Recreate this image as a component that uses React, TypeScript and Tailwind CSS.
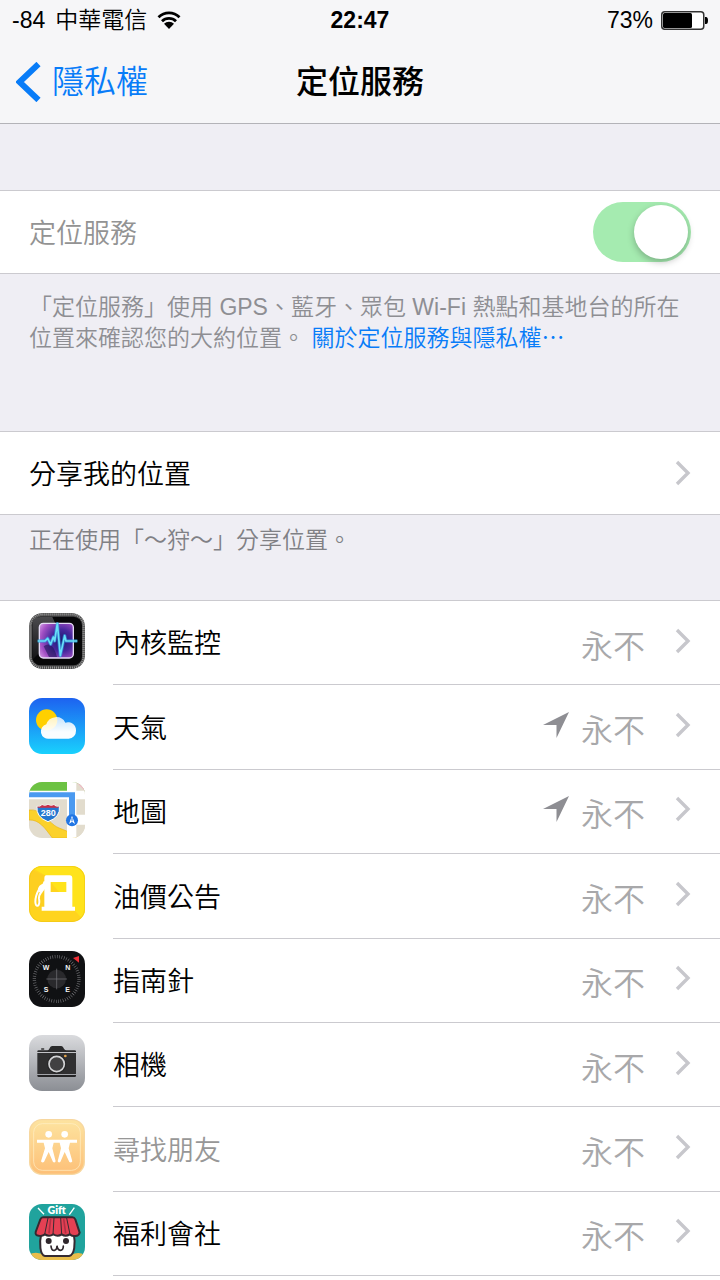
import type { ReactNode } from "react";

interface AppEntry {
  id: string;
  name: string;
  icon: ReactNode;
  recent?: boolean;
  disabled?: boolean;
}

function IconFrame({ children }: { children: ReactNode }) {
  return (
    <svg viewBox="0 0 168 168" className="mb-1 size-14 shrink-0 rounded-[13px]" aria-hidden="true">
      {children}
    </svg>
  );
}

function MonitorIcon() {
  return (
    <IconFrame>
      <defs>
        <radialGradient id="monitor-screen" cx="0.65" cy="0.5" r="0.8">
          <stop offset="0" stopColor="#181a70" />
          <stop offset="0.4" stopColor="#47289c" />
          <stop offset="0.75" stopColor="#a24fc4" />
          <stop offset="1" stopColor="#d49ae6" />
        </radialGradient>
        <linearGradient id="monitor-gloss" x1="0" y1="0" x2="0" y2="1">
          <stop offset="0" stopColor="#77777b" />
          <stop offset="1" stopColor="#1b1b1e" />
        </linearGradient>
      </defs>
      <rect width="168" height="168" rx="38" fill="#4b4b4b" />
      <rect x="4" y="4" width="160" height="160" rx="34" fill="none" stroke="#9b9b9b" strokeWidth="7" strokeDasharray="3 3" />
      <rect x="9" y="11" width="150" height="146" rx="26" fill="#070708" />
      <path d="M35 12H70L92 60L30 120L10 140V37Q10 12 35 12Z" fill="url(#monitor-gloss)" opacity="0.6" />
      <rect x="31" y="31" width="102" height="104" rx="12" fill="url(#monitor-screen)" stroke="#e5dcf5" strokeWidth="4" />
      <path d="M44 100Q70 80 84 132H60Z" fill="#1d1458" opacity="0.6" />
      <path d="M26 84H48L56 76L65 94L73 72L77 84L85 32L94 128L107 68L111 84H145" fill="none" stroke="#2e9eea" strokeWidth="10" strokeLinejoin="round" opacity="0.6" />
      <path d="M26 84H48L56 76L65 94L73 72L77 84L85 32L94 128L107 68L111 84H145" fill="none" stroke="#67e0f8" strokeWidth="5" strokeLinejoin="round" />
    </IconFrame>
  );
}

function WeatherIcon() {
  return (
    <IconFrame>
      <defs>
        <linearGradient id="weather-sky" x1="0" y1="0" x2="0" y2="1">
          <stop offset="0" stopColor="#1d62f0" />
          <stop offset="1" stopColor="#19d1fd" />
        </linearGradient>
        <linearGradient id="weather-cloud" x1="0" y1="0" x2="0" y2="1">
          <stop offset="0" stopColor="#fff" stopOpacity="0.75" />
          <stop offset="0.7" stopColor="#fff" stopOpacity="0.98" />
        </linearGradient>
      </defs>
      <rect width="168" height="168" fill="url(#weather-sky)" />
      <circle cx="53" cy="66" r="32" fill="#ffd000" />
      <path d="M61 122A22 22 0 0 1 52 79A31 31 0 0 1 109 74A24 24 0 0 1 141 98A23 23 0 0 1 119 122Z" fill="url(#weather-cloud)" />
    </IconFrame>
  );
}

function MapsIcon() {
  return (
    <IconFrame>
      <rect width="168" height="168" fill="#e2dccd" />
      <rect width="168" height="30" fill="#6cc243" />
      <path d="M0 84C36 80 50 110 76 130C94 143 108 140 150 168H70C48 138 30 112 0 114Z" fill="#fbd12b" stroke="#e9b51a" strokeWidth="2" />
      <path d="M136 0H168V168H136Z" fill="#e2dccd" />
      <path d="M142 0H168V28Z" fill="#f6b3cb" />
      <path d="M0 26H168V52H0ZM114 0H142V168H114ZM138 98H168V128H138Z" fill="#fff" />
      <path d="M0 31H138V112H120V46H0Z" fill="#4b9af0" />
      <path d="M24 73Q33 76 39 69Q48 74 57 68Q66 74 75 69Q81 76 91 73Q96 105 57 119Q20 105 24 73Z" fill="#2477cf" stroke="#fff" strokeWidth="3" />
      <path d="M26 73Q33 76 39 69Q48 74 57 68Q66 74 75 69Q81 76 89 73L88 77H26Z" fill="#c92f45" />
      <text x="58" y="101" textAnchor="middle" fontSize="27" fontWeight="700" fill="#fff" fontFamily="Liberation Sans, sans-serif">280</text>
      <circle cx="129" cy="115" r="18" fill="#2176e4" />
      <path d="M129 101L138 126L129 119L120 126Z" fill="#fff" />
      <path d="M129 108V118" stroke="#2176e4" strokeWidth="3" />
    </IconFrame>
  );
}

function FuelIcon() {
  return (
    <IconFrame>
      <rect width="168" height="168" fill="#ffd41e" />
      <path d="M48 28L0 0H168V168L136 132Z" fill="#ffe31b" />
      <path d="M0 8L48 30V132H0Z" fill="#fccb22" opacity="0.55" />
      <rect x="1" y="1" width="166" height="166" rx="38" fill="none" stroke="#edc414" strokeWidth="2" />
      <path d="M52 28H122Q130 28 130 38V122H138V134H38V122H46V38Q46 28 52 28ZM65 48V78H112V48Z" fill="#fff" fillRule="evenodd" />
      <path d="M31 68Q19 88 19 108Q20 122 27 119Q33 114 30 98Q29 88 38 76" fill="none" stroke="#fff" strokeWidth="6" strokeLinejoin="round" />
      <path d="M27 68Q29 58 41 53L44 46H50V66L38 82L30 78Z" fill="#fff" />
    </IconFrame>
  );
}

function CompassIcon() {
  return (
    <IconFrame>
      <rect width="168" height="168" fill="#101113" />
      <circle cx="83" cy="84" r="67" fill="none" stroke="#8c8c90" strokeWidth="10" strokeDasharray="1.5 5.5" />
      <circle cx="83" cy="84" r="28" fill="#29292c" />
      <path d="M52 84H114M83 53V115" stroke="#77777b" strokeWidth="2" />
      <path d="M150 15V35L132 21Z" fill="#f02e36" />
      <g fill="#f5f5f5" fontSize="21" fontWeight="700" textAnchor="middle" fontFamily="Liberation Sans, sans-serif">
        <text x="51" y="58">W</text>
        <text x="116" y="58">N</text>
        <text x="51" y="123">S</text>
        <text x="116" y="123">E</text>
      </g>
    </IconFrame>
  );
}

function CameraIcon() {
  return (
    <IconFrame>
      <defs>
        <linearGradient id="camera-back" x1="0" y1="0" x2="0" y2="1">
          <stop offset="0" stopColor="#dadbde" />
          <stop offset="1" stopColor="#8b8e94" />
        </linearGradient>
      </defs>
      <rect width="168" height="168" fill="url(#camera-back)" />
      <path d="M25 51V49Q25 46 29 46H55Q59 46 61 41Q64 33 69 33H97Q102 33 105 41Q108 46 112 46H137Q141 46 141 49V51Z" fill="#2b2b2c" />
      <rect x="36" y="40" width="10" height="4" rx="2" fill="#333" />
      <rect x="25" y="54" width="116" height="63" fill="#303031" />
      <path d="M25 120H141V122Q141 126 137 126H29Q25 126 25 122Z" fill="#242425" />
      <circle cx="83" cy="87" r="29" fill="#252526" />
      <circle cx="83" cy="87" r="23" fill="#414142" stroke="#d2d3d5" strokeWidth="5" />
      <circle cx="109" cy="63" r="4" fill="#e4a34a" />
    </IconFrame>
  );
}

function FriendsIcon() {
  return (
    <IconFrame>
      <defs>
        <linearGradient id="friends-back" x1="0" y1="0" x2="0" y2="1">
          <stop offset="0" stopColor="#fde39f" />
          <stop offset="1" stopColor="#fdc078" />
        </linearGradient>
      </defs>
      <rect width="168" height="168" fill="#f7d79f" />
      <rect x="4" y="4" width="160" height="160" rx="35" fill="url(#friends-back)" />
      <rect x="14" y="14" width="140" height="140" rx="26" fill="none" stroke="#fff0c8" strokeWidth="2" />
      <g fill="#fff">
        <circle cx="59" cy="46" r="10" />
        <circle cx="107" cy="46" r="10" />
        <path d="M24 62H144V71H123L119 88L130 127Q128 132 121 129L107 99L94 129Q88 132 86 127L96 88L92 71H74L70 88L80 127Q78 132 72 129L59 99L45 129Q38 132 36 127L48 88L44 71H24Z" />
      </g>
    </IconFrame>
  );
}

function GiftIcon() {
  return (
    <IconFrame>
      <rect width="168" height="168" fill="#20a39d" />
      <path d="M0 168V152Q20 140 50 154H126Q148 140 168 154V168Z" fill="#e8bd4b" />
      <path d="M27 12L45 31M136 11L121 32" stroke="#fff" strokeWidth="4" />
      <text x="83" y="30" textAnchor="middle" fontSize="32" fontWeight="800" fill="#fff" fontFamily="Lato, sans-serif">Gift</text>
      <path d="M37 88C30 118 33 153 48 156H120C137 153 140 118 134 88Z" fill="#fff" stroke="#352a31" strokeWidth="6" />
      <path d="M42 40H130Q136 40 139 46L152 86Q150 96 139 96Q130 97 122 91Q110 99 98 91Q86 99 73 91Q60 99 48 91Q38 98 29 95Q18 94 20 84L34 46Q37 40 42 40Z" fill="#e54053" stroke="#352a31" strokeWidth="6" />
      <path d="M57 42L47 91M75 42L72 91M95 42L98 91M113 42L123 91" stroke="#352a31" strokeWidth="3" />
      <path d="M65 44L60 88M104 44L110 88" stroke="#b32f45" strokeWidth="5" />
      <circle cx="59" cy="111" r="9" fill="#30272d" />
      <circle cx="111" cy="111" r="9" fill="#30272d" />
      <path d="M66 126Q67 140 76 139Q84 137 84 125Q85 138 94 139Q103 139 103 126" fill="none" stroke="#30272d" strokeWidth="5" strokeLinecap="round" />
    </IconFrame>
  );
}

function Chevron() {
  return (
    <svg viewBox="0 0 16 26" className="h-[26px] w-4 shrink-0" aria-hidden="true">
      <path d="M2 2L13 13L2 24" fill="none" stroke="#c7c7cc" strokeWidth="3.4" />
    </svg>
  );
}

function LocationArrow() {
  return (
    <svg viewBox="0 0 26 26" className="size-[26px]" role="img" aria-label="最近使用">
      <path d="M26 0L13.5 26V13H0Z" fill="#8e8e93" />
    </svg>
  );
}

const apps: AppEntry[] = [
  { id: "monitor", name: "內核監控", icon: <MonitorIcon /> },
  { id: "weather", name: "天氣", icon: <WeatherIcon />, recent: true },
  { id: "maps", name: "地圖", icon: <MapsIcon />, recent: true },
  { id: "fuel", name: "油價公告", icon: <FuelIcon /> },
  { id: "compass", name: "指南針", icon: <CompassIcon /> },
  { id: "camera", name: "相機", icon: <CameraIcon /> },
  { id: "friends", name: "尋找朋友", icon: <FriendsIcon />, disabled: true },
  { id: "gift", name: "福利會社", icon: <GiftIcon /> },
];

function StatusBar() {
  return (
    <div className="grid h-10 grid-cols-3 items-center px-3 text-[23px] leading-10">
      <div className="flex items-center gap-2.5 font-[350] whitespace-nowrap">
        <span>-84</span>
        <span>中華電信</span>
        <svg viewBox="0 0 24 18" className="h-[18px] w-6 shrink-0" aria-label="Wi-Fi" role="img">
          <path d="M1.5 6.2A15 15 0 0 1 22.5 6.2M5 10.2A10 10 0 0 1 19 10.2" fill="none" stroke="#000" strokeWidth="2.8" />
          <path d="M7 12.8A7 7 0 0 1 17 12.8L12 18Z" />
        </svg>
      </div>
      <div className="text-center font-bold">22:47</div>
      <div className="flex items-center justify-end gap-2">
        <span>73%</span>
        <svg viewBox="0 0 47 19" className="h-[19px] w-[47px]" aria-hidden="true">
          <rect x="0.75" y="0.75" width="42" height="17.5" rx="3" fill="#fff" stroke="#333" strokeWidth="1.5" />
          <rect x="2" y="2" width="29" height="15" rx="1.5" />
          <path d="M44 6H45Q47 6 47 9.5Q47 13 45 13H44Z" />
        </svg>
      </div>
    </div>
  );
}

export default function LocationServicesPage() {
  return (
    <div
      lang="zh-Hant"
      className="flex min-h-screen flex-col bg-[#efeef4] font-['Liberation_Sans','Noto_Sans_CJK_TC',sans-serif] text-black"
    >
      <header className="border-b border-[#b3b3b8] bg-[#f6f6f8]">
        <StatusBar />
        <nav className="grid h-[83px] grid-cols-[1fr_auto_1fr] items-center px-4 text-[32px]">
          <a href="#privacy" className="flex items-center gap-2.5 font-[350] text-[#087cf8]">
            <svg viewBox="0 0 26 40" className="h-10 w-[26px]" aria-hidden="true">
              <path d="M22.5 2L3.5 20L22.5 38" fill="none" stroke="#087cf8" strokeWidth="6" />
            </svg>
            隱私權
          </a>
          <h1 className="font-medium">定位服務</h1>
        </nav>
      </header>

      {/* Master switch */}
      <section className="pt-[66px]">
        <div className="flex h-[84px] items-center justify-between border-y border-[#cbcacf] bg-white px-[29px]">
          <label htmlFor="location-services" className="pt-1 text-[27px] font-[350] text-[#939393]">
            定位服務
          </label>
          <input
            id="location-services"
            type="checkbox"
            role="switch"
            defaultChecked
            className="flex h-[60px] w-[98px] appearance-none items-center rounded-full bg-[#e5e5e5] p-[3px] before:size-[54px] before:rounded-full before:bg-white before:shadow-[0_3px_7px_rgba(0,0,0,0.25)] checked:justify-end checked:bg-[#a5ebb0]"
          />
        </div>
        <p className="px-[29px] pt-[18px] text-[23px] leading-[31px] font-[350] text-[#8e8e93]">
          「定位服務」使用 GPS、藍牙、眾包 Wi-Fi 熱點和基地台的所在位置來確認您的大約位置。{" "}
          <a href="#about" className="font-['Noto_Sans_CJK_TC',sans-serif] leading-5 text-[#087cf8]">
            關於定位服務與隱私權…
          </a>
        </p>
      </section>

      {/* Location sharing */}
      <section className="pt-[77px]">
        <a
          href="#share"
          className="flex h-[84px] items-center justify-between border-y border-[#cbcacf] bg-white px-[29px] text-[27px] font-[350]"
        >
          <span className="pt-1">分享我的位置</span>
          <Chevron />
        </a>
        <p className="px-[29px] pt-2.5 text-[23px] leading-[31px] font-[350] text-[#808085]">
          正在使用「～狩～」分享位置。
        </p>
      </section>

      <section className="mt-11 grow border-t border-[#cbcacf] bg-white">
        <ul className="grid min-h-[675px] auto-rows-fr">
          {apps.map((app) => (
            <li key={app.id} className="flex">
              <a href={`#${app.id}`} className="flex grow items-center gap-7 pl-[29px]">
                {app.icon}
                <div className="flex grow items-center self-stretch border-b border-[#cbcacf] pr-[29px] pb-1">
                  <span
                    className={
                      app.disabled
                        ? "grow pt-2 text-[27px] font-[350] text-[#979797]"
                        : "grow pt-2 text-[27px] font-[350]"
                    }
                  >
                    {app.name}
                  </span>
                  {app.recent && <LocationArrow />}
                  <span className="mr-[30px] ml-3 pt-3 text-[32px] leading-10 font-[350] text-[#a8a8aa]">永不</span>
                  <Chevron />
                </div>
              </a>
            </li>
          ))}
        </ul>
      </section>
    </div>
  );
}
